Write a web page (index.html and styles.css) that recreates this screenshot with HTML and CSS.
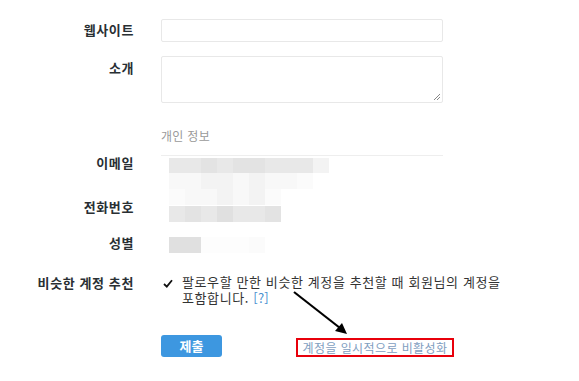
FILE: index.html
```html
<!DOCTYPE html>
<html lang="ko">
<head>
<meta charset="utf-8">
<link rel="stylesheet" href="styles.css">
</head>
<body>
<div class="page">
  <div class="row row-website">
    <div class="label">웹사이트</div>
    <div class="control"><div class="input"></div></div>
  </div>
  <div class="row row-bio">
    <div class="label">소개</div>
    <div class="control"><div class="textarea"><svg class="grip" width="8" height="8" viewBox="0 0 8 8"><path d="M7 1 L1 7 M7 4 L4 7" stroke="#888" stroke-width="1"/></svg></div></div>
  </div>
  <div class="section">
    <div class="section-title">개인 정보</div>
  </div>
  <div class="row row-email">
    <div class="label">이메일</div>
    <div class="control">
      <div class="pix">
        <div class="prow"><i class="g2"></i><i class="g2"></i><i class="g3"></i><i class="g2"></i><i class="g3"></i><i class="g3"></i><i class="g2"></i><i class="g2"></i><i class="g2"></i><i class="g5"></i></div>
        <div class="prow"><i class="g6"></i><i class="g6"></i><i class="g5"></i><i class="g5"></i><i class="g6"></i><i class="g5"></i><i class="g6"></i><i class="g6"></i><i class="g7"></i></div>
        <div class="prow"><i class="g7"></i><i class="g6"></i><i class="g6"></i><i class="g5"></i><i class="g6"></i><i class="g5"></i><i class="g7"></i></div>
      </div>
    </div>
  </div>
  <div class="row row-phone">
    <div class="label">전화번호</div>
    <div class="control">
      <div class="prow"><i class="g2"></i><i class="g3"></i><i class="g2"></i><i class="g1"></i><i class="g2"></i><i class="g2"></i><i class="g3"></i></div>
    </div>
  </div>
  <div class="row row-gender">
    <div class="label">성별</div>
    <div class="control">
      <div class="prow"><i class="g1"></i><i class="g1"></i><i class="g8"></i><i class="g8"></i><i class="g8"></i><i class="g7"></i></div>
    </div>
  </div>
  <div class="row row-similar">
    <div class="label">비슷한 계정 추천</div>
    <div class="control check">
      <span class="tick"><svg width="10" height="9" viewBox="0 0 10 9"><path d="M1 5 L3.8 7.6 L9 1.2" fill="none" stroke="#111" stroke-width="1.8"/></svg></span>
      <p class="check-text">팔로우할 만한 비슷한 계정을 추천할 때 회원님의 계정을<br>포함합니다. <a class="help">[?]</a></p>
    </div>
  </div>
  <div class="row row-actions">
    <div class="label"></div>
    <div class="control actions">
      <button class="btn">제출</button>
      <span class="deact-box"><a class="deact">계정을 일시적으로 비활성화</a></span>
    </div>
  </div>
  <svg class="arrow" width="70" height="50" viewBox="0 0 70 50">
    <path d="M3 2 L49 38" stroke="#000" stroke-width="2.2" fill="none"/>
    <path d="M56 44 L44 41 L51 33 Z" fill="#000"/>
  </svg>
</div>
</body>
</html>
```
FILE: styles.css
```css
* { box-sizing: border-box; }
html, body { margin: 0; padding: 0; background: #fff; }
body {
  font-family: "Noto Sans CJK KR", "Liberation Sans", sans-serif;
  color: #333;
  width: 579px;
  height: 381px;
  overflow: hidden;
}
.page { position: relative; padding-top: 19px; }
.row {
  display: grid;
  grid-template-columns: 134px 400px;
  column-gap: 27px;
  align-items: start;
}
.label {
  text-align: right;
  font-weight: bold;
  font-size: 13px;
  line-height: 18px;
  color: #292f33;
  letter-spacing: 0.6px;
  white-space: nowrap;
}
.input {
  width: 282px;
  height: 23px;
  border: 1px solid #e8e8e8;
  border-radius: 2px;
  background: #fff;
}
.row-website .label { padding-top: 2px; }
.row-bio { margin-top: 14px; }
.row-bio .label { padding-top: 3px; }
.textarea {
  position: relative;
  width: 282px;
  height: 47px;
  border: 1px solid #e8e8e8;
  border-radius: 2px;
}
.grip { position: absolute; right: 1px; bottom: 1px; }
.section { margin: 24px 0 0 161px; width: 282px; border-bottom: 1px solid #eeeeee; padding-bottom: 11px; }
.section-title { font-size: 12px; line-height: 17px; color: #9a9a9a; letter-spacing: 0.3px; }
.row-email { margin-top: 2px; }
.row-email .label { margin-top: -4px; }
.pix { display: flex; flex-direction: column; margin-left: 8px; }
.prow { display: flex; height: 16px; }
.row-email .pix .prow:first-child { height: 15px; }
.row-phone .prow, .row-gender .prow { margin-left: 8px; }
.prow i { display: block; width: 16px; height: 100%; }
.g1 { background: #e0e0e0; }
.g2 { background: #e8e8e8; }
.g3 { background: #e3e3e3; }
.g5 { background: #f3f3f3; }
.g6 { background: #f8f8f8; }
.g7 { background: #fbfbfb; }
.g8 { background: #fdfdfd; }
.row-phone { margin-top: 1px; }
.row-phone .label { margin-top: -8px; }
.row-gender { margin-top: 15px; }
.row-gender .label { margin-top: -3px; }
.row-similar { margin-top: 21px; }
.check { display: flex; align-items: flex-start; gap: 9px; }
.tick { display: block; flex-shrink: 0; width: 12px; padding-top: 5px; padding-left: 2px; }
.tick svg { display: block; }
.check-text {
  margin: 0;
  font-size: 13px;
  line-height: 16px;
  color: #333;
  letter-spacing: 0.6px;
  white-space: nowrap;
}
.help { color: #4a8fd0; letter-spacing: 0.2px; }
.row-actions { margin-top: 29px; }
.actions { display: flex; align-items: flex-start; }
.btn {
  flex-shrink: 0;
  width: 61px;
  height: 22px;
  margin: 0;
  padding: 0;
  border: none;
  border-radius: 3px;
  background: #3d97e0;
  color: #fff;
  font-family: inherit;
  font-weight: bold;
  font-size: 13px;
  line-height: 22px;
}
.deact-box {
  flex-shrink: 0;
  margin-left: 74px;
  margin-top: 3px;
  width: 158px;
  height: 19px;
  border: 2px solid #e8000b;
  display: flex;
  align-items: center;
  justify-content: center;
}
.deact { color: #7f9ebf; font-size: 12px; line-height: 15px; letter-spacing: 0.4px; }
.arrow { position: absolute; left: 291px; top: 290px; }
```
